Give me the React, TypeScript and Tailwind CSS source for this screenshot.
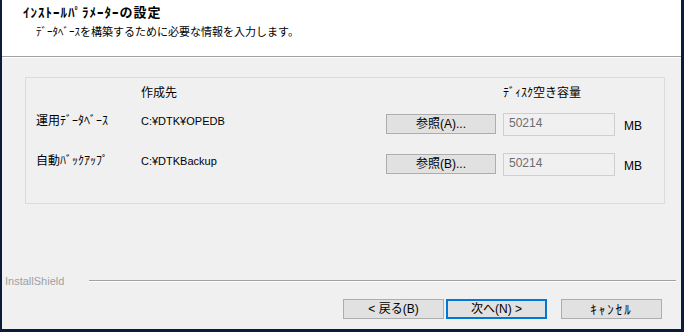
import React from 'react';

const font = { fontFamily: '"Liberation Sans", "Noto Sans CJK JP", sans-serif' };

function Btn({ label, focused = false, wide = false }: { label: string; focused?: boolean; wide?: boolean }) {
    return (
        <div
            className={
                'flex h-[20px] w-[101px] items-center justify-center bg-[#e1e1e1] text-[12px] leading-none text-black ' +
                (focused ? 'border-2 border-[#0078d7] ' : 'border border-[#adadad] ') +
                (wide ? 'text-[13px] tracking-[2px]' : '')
            }
        >
            {label}
        </div>
    );
}

function PathRow({ label, path, browse }: { label: string; path: string; browse: string }) {
    return (
        <div className="flex h-[23px] items-start">
            <div className="w-[105px] pt-[1px] text-[12px] leading-[14px]">{label}</div>
            <div className="w-[245px] pt-[1px] text-[11px] leading-[14px]">{path}</div>
            <div className="mt-[1px] flex h-[20px] w-[110px] items-center justify-center border border-[#adadad] bg-[#e1e1e1] text-[12px] leading-none">
                {browse}
            </div>
            <div className="ml-[7px] h-[23px] w-[112px] border border-[#cfcfcf] bg-[#f0f0f0] pl-[5px] pt-[2px] text-[12px] leading-[14px] text-[#6d6d6d]">
                50214
            </div>
            <div className="ml-[9px] self-center pt-[2px] text-[12px] leading-[14px]">MB</div>
        </div>
    );
}

export default function App() {
    return (
        <div className="h-[332px] w-[684px] bg-[#0c1a3c] pb-[3px] pl-[2px] pr-[3px]" style={font}>
            <div className="flex h-full flex-col bg-[#f0f0f0] text-black">
                {/* header */}
                <div className="h-[56px] bg-white pl-[21px] pt-[5px]">
                    <div className="text-[13px] font-bold leading-[16px] tracking-[1px]">ｲﾝｽﾄｰﾙﾊﾟﾗﾒｰﾀｰの設定</div>
                    <div className="mt-[3px] pl-[13px] text-[11px] leading-[16px]">
                        ﾃﾞｰﾀﾍﾞｰｽを構築するために必要な情報を入力します。
                    </div>
                </div>
                <div className="h-px bg-[#a0a0a0]" />
                <div className="h-px bg-white" />

                {/* group box */}
                <div className="ml-[23px] mr-[16px] mt-[19px] h-[127px] border border-[#dcdcdc] pl-[10px] pt-[8px]">
                    <div className="flex text-[12px] leading-[14px]">
                        <div className="w-[105px]" />
                        <div className="w-[362px]">作成先</div>
                        <div>ﾃﾞｨｽｸ空き容量</div>
                    </div>
                    <div className="mt-[13px] flex flex-col gap-[17px]">
                        <PathRow label="運用ﾃﾞｰﾀﾍﾞｰｽ" path="C:¥DTK¥OPEDB" browse="参照(A)..." />
                        <PathRow label="自動ﾊﾞｯｸｱｯﾌﾟ" path="C:¥DTKBackup" browse="参照(B)..." />
                    </div>
                </div>

                <div className="flex-1" />

                {/* footer */}
                <div className="flex items-center pl-[3px] pr-[5px]">
                    <span className="text-[11px] leading-[14px] text-[#a0a0a0]">InstallShield</span>
                    <div className="ml-[25px] flex-1">
                        <div className="h-px bg-[#a0a0a0]" />
                        <div className="h-px bg-white" />
                    </div>
                </div>
                <div className="mb-[10px] mt-[11px] flex pl-[341px]">
                    <Btn label="< 戻る(B)" />
                    <div className="ml-[2px]">
                        <Btn label="次へ(N) >" focused />
                    </div>
                    <div className="ml-[14px]">
                        <Btn label="ｷｬﾝｾﾙ" wide />
                    </div>
                </div>
            </div>
        </div>
    );
}
